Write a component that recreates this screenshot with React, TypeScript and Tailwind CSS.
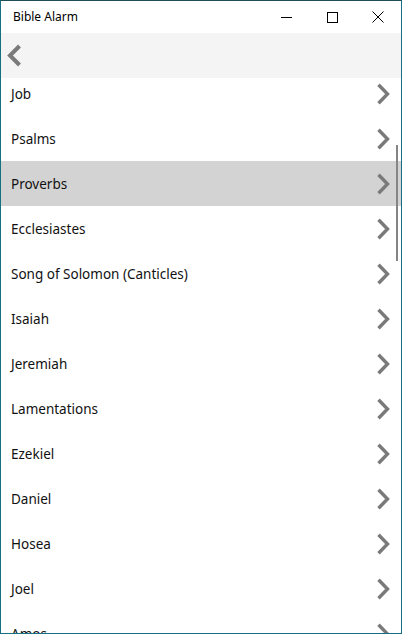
const books = [
  "Job",
  "Psalms",
  "Proverbs",
  "Ecclesiastes",
  "Song of Solomon (Canticles)",
  "Isaiah",
  "Jeremiah",
  "Lamentations",
  "Ezekiel",
  "Daniel",
  "Hosea",
  "Joel",
  "Amos",
];

function Chevron() {
  return (
    <svg width="15" height="22" viewBox="0 0 15 22" className="shrink-0">
      <polyline points="2.5,1.8 11.5,11 2.5,20.2" fill="none" stroke="#7a7a7a" strokeWidth="3.4" />
    </svg>
  );
}

export default function App() {
  return (
    <div className="w-[402px] h-[634px] flex flex-col border border-[#17707f] border-t-[#1d4e57] bg-white overflow-hidden" style={{ fontFamily: "'Noto Sans', 'Open Sans', sans-serif" }}>
      {/* title bar */}
      <div className="h-[32px] flex items-center shrink-0 bg-white">
        <span className="pl-[12px] text-[12px] text-black flex-1">Bible Alarm</span>
        <div className="flex h-full">
          <div className="w-[46px] flex items-center justify-center">
            <div className="w-[11px] h-px bg-black" />
          </div>
          <div className="w-[46px] flex items-center justify-center">
            <div className="w-[11px] h-[11px] border border-black" />
          </div>
          <div className="w-[46px] flex items-center justify-center">
            <svg width="12" height="12" viewBox="0 0 12 12">
              <path d="M0.5 0.5 L11.5 11.5 M11.5 0.5 L0.5 11.5" stroke="black" strokeWidth="1" />
            </svg>
          </div>
        </div>
      </div>

      {/* nav bar */}
      <div className="h-[45px] shrink-0 bg-[#f4f4f4] flex items-center pl-[5px]">
        <svg width="18" height="24" viewBox="0 0 18 24">
          <polyline points="13.5,2 4,11.5 13.5,21" fill="none" stroke="#7a7a7a" strokeWidth="4" />
        </svg>
      </div>

      {/* list */}
      <div className="relative flex-1 overflow-hidden">
        <div className="-mt-[7px] flex flex-col">
          {books.map((b) => (
            <div
              key={b}
              className={`h-[45px] shrink-0 flex items-center justify-between pl-[10px] pr-[10px] ${b === "Proverbs" ? "bg-[#d3d3d3]" : ""}`}
            >
              <span className="pt-[2px] text-[13.5px] text-[#111]">{b}</span>
              <Chevron />
            </div>
          ))}
        </div>
        <div className="absolute right-[3px] top-[67px] w-[2px] h-[116px] bg-[#858585]" />
      </div>
    </div>
  );
}
